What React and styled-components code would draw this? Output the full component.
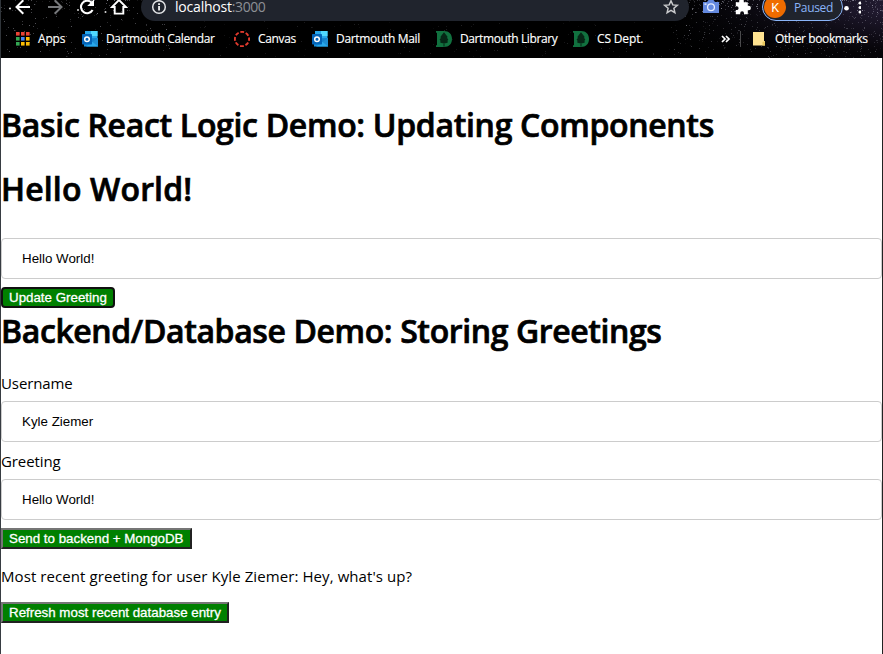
import React from "react";
import styled, { createGlobalStyle } from "styled-components";

const Global = createGlobalStyle`
  * { box-sizing: border-box; }
  html, body { margin: 0; padding: 0; background: #fff; overflow: hidden; }
`;

const Window = styled.div`
  width: 883px;
  height: 654px;
  overflow: hidden;
  display: flex;
  flex-direction: column;
  font-family: "Open Sans", "Noto Sans", sans-serif;
  color: #000;
`;

const Chrome = styled.header`
  position: relative;
  height: 58px;
  flex: none;
  overflow: hidden;
  background: #000;
  border-left: 1px solid #30353a;
`;

const Sky = styled.svg`
  position: absolute;
  inset: 0;
  display: block;
`;

const NavRow = styled.div`
  position: relative;
  display: flex;
  align-items: center;
  height: 28px;
  margin-top: -7px;
  padding-left: 13px;
`;

const NavIcon = styled.svg`
  display: block;
  flex: none;
  width: 18px;
  height: 18px;
  margin-left: ${(p) => p.$before || 0}px;
  margin-right: ${(p) => p.$gap || 0}px;
`;

const AddressBar = styled.div`
  display: flex;
  align-items: center;
  flex: none;
  width: 548px;
  height: 28px;
  padding: 0 9px;
  border-radius: 14px;
  background: #20242d;
  color: #8d9095;
  font-size: 14px;
  line-height: 20px;
`;

const Url = styled.div`
  flex: 1;
  letter-spacing: -0.43px;
`;

const Host = styled.span`
  color: #fff;
  letter-spacing: -0.2px;
`;

const Profile = styled.div`
  display: flex;
  align-items: center;
  flex: none;
  width: 81px;
  height: 28px;
  border: 1px solid #8ab4f8;
  border-radius: 14px;
  background: #20242d;
  color: #8ab4f8;
  font-size: 12px;
  letter-spacing: -0.35px;
`;

const Avatar = styled.span`
  display: grid;
  place-items: center;
  width: 22px;
  height: 22px;
  margin: 0 8px 0 1px;
  border-radius: 50%;
  background: #ef6c00;
  color: #fff;
  font-family: Roboto, sans-serif;
  font-size: 12.5px;
`;

const Bookmarks = styled.nav`
  position: relative;
  display: flex;
  align-items: center;
  height: 36px;
  padding-left: 13px;
  color: #fff;
  font-size: 12px;
  line-height: 16px;
  -webkit-text-stroke: 0.15px #fff;
`;

const Bookmark = styled.div`
  display: flex;
  align-items: center;
  flex: none;
  gap: 8px;
  width: ${(p) => p.$width}px;
  white-space: nowrap;
  letter-spacing: ${(p) => p.$spacing || 0}px;
  svg { display: block; flex: none; }
`;

const Divider = styled.i`
  width: 1px;
  height: 16px;
  margin-right: 12px;
  background: #4a4a4c;
`;

const Page = styled.main`
  flex: 1;
  background: #fff;
  border-left: 1px solid #373c42;
  border-right: 1px solid #222;
  padding-top: 45px;
`;

const Heading = styled.h1`
  margin: ${(p) => p.$before || 0}px 0 ${(p) => p.$after}px;
  font-size: 32px;
  line-height: 43px;
  font-weight: 600;
  -webkit-text-stroke: 0.7px #000;
  white-space: nowrap;
  letter-spacing: ${(p) => p.$spacing || 0}px;
`;

const Label = styled.label`
  display: block;
  height: 21px;
  font-size: 15px;
  line-height: 23px;
  letter-spacing: -0.1px;
`;

const Field = styled.input`
  display: block;
  width: 100%;
  height: 41px;
  margin: 8px 0;
  padding: 12px 20px;
  border: 1px solid #ccc;
  border-radius: 4px;
  outline: none;
  background: #fff;
  color: #000;
  font-family: "Liberation Sans", Arial, sans-serif;
  font-size: 13.333px;
`;

const Action = styled.button`
  display: block;
  width: ${(p) => p.$width}px;
  height: 21px;
  padding: 0 6px;
  border: 2px solid;
  border-color: ${(p) => (p.$focused ? "#101010" : "#767676 #212121 #212121 #767676")};
  border-radius: ${(p) => (p.$focused ? 4 : 0)}px;
  background: #008000;
  color: #fff;
  font-family: "Liberation Sans", Arial, sans-serif;
  font-size: 13.333px;
  line-height: 16px;
  text-align: left;
  white-space: nowrap;
  -webkit-text-stroke: 0.3px #fff;
`;

const Message = styled.p`
  margin: 17px 0 15px;
  font-size: 15px;
  line-height: 21px;
  white-space: nowrap;
  letter-spacing: 0.085px;
`;

function makeStars() {
  let seed = 71;
  const rand = () => {
    seed = (seed * 16807) % 2147483647;
    return seed / 2147483647;
  };
  const stars = [];
  for (let i = 0; i < 220; i++) {
    stars.push({ x: rand() * 180, y: 58 * Math.pow(rand(), 1.9), o: 0.08 + rand() * 0.32 });
  }
  for (let i = 0; i < 520; i++) {
    stars.push({ x: 882 - 210 * Math.pow(rand(), 1.3), y: 58 * Math.pow(rand(), 1.3), o: 0.06 + rand() * 0.22 });
  }
  for (let i = 0; i < 130; i++) {
    stars.push({ x: 190 + rand() * 490, y: 20 + rand() * 37, o: 0.04 + rand() * 0.11 });
  }
  for (let i = 0; i < 120; i++) {
    stars.push({ x: 690 + rand() * 190, y: rand() * 13, o: 0.2 + rand() * 0.35 });
  }
  return stars;
}
const STARS = makeStars();

const StarField = () => (
  <Sky width="882" height="58">
    <defs>
      <linearGradient id="glow" x1="0" x2="1">
        <stop offset="0.76" stopColor="#171426" stopOpacity="0" />
        <stop offset="1" stopColor="#211a30" />
      </linearGradient>
      <linearGradient id="fade" x1="0" x2="0" y1="0" y2="1">
        <stop offset="0.2" stopColor="#000" stopOpacity="0" />
        <stop offset="0.9" stopColor="#000" stopOpacity="0.85" />
      </linearGradient>
    </defs>
    <rect width="882" height="58" fill="url(#glow)" />
    <rect width="882" height="58" fill="url(#fade)" />
    {STARS.map((s, i) => (
      <rect key={i} x={Math.floor(s.x)} y={Math.floor(s.y)} width="1" height="1" fill="#dcdcec" opacity={s.o} />
    ))}
    <g fill="#d5d5d5">
      <circle cx="9" cy="8.5" r="1.1" />
      <circle cx="104.5" cy="12" r="1" />
      <circle cx="77" cy="10" r="1" />
    </g>
  </Sky>
);

const Outlook = () => (
  <svg width="16" height="16" viewBox="0 0 16 16">
    <path d="M3 0h12.5v9H3z" fill="#28a8ea" />
    <path d="M9 0h6.5v5H9z" fill="#50d9ff" />
    <path d="M2 7h14v8.5H2z" fill="#1490df" />
    <path d="M16 7v8.5H4z" fill="#28a8ea" />
    <path d="M7 8l9 7.5V7z" fill="#1677bd" opacity=".55" />
    <rect x="0" y="3" width="10" height="10.5" rx="0.7" fill="#0364b8" />
    <circle cx="5" cy="8.2" r="2.3" fill="none" stroke="#fff" strokeWidth="1.5" />
  </svg>
);

const Dartmouth = () => (
  <svg width="16" height="16" viewBox="0 0 16 16">
    <path d="M0 0h8c5 0 8 3.2 8 8s-3 8-8 8H0v-1.5l1-.5V2L0 1.5z" fill="#11713f" />
    <path d="M8 1.2L10 3.8l1.5 2-.4 1.1 1.2 1.7-.8 1.2.3 1.7-2.1.8-1.2-.2v3.4h-1v-3.4l-1.3.2-2-.8.3-1.7-.9-1.2L4.9 7l-.5-1.1L6 3.8z" fill="#062616" />
  </svg>
);

const CanvasLogo = () => (
  <svg width="16" height="16" viewBox="0 0 16 16">
    <circle cx="8" cy="8" r="7.1" fill="none" stroke="#e23b2e" strokeWidth="1.9" strokeDasharray="3.8 1.776" strokeDashoffset="1.9" />
  </svg>
);

const APP_COLORS = ["#ea4335", "#ea4335", "#ea4335", "#34a853", "#4285f4", "#fbbc04", "#34a853", "#fbbc04", "#fbbc04"];
const AppsGrid = () => (
  <svg width="16" height="16" viewBox="0 0 16 16">
    {APP_COLORS.map((c, i) => (
      <rect key={i} x={2 + (i % 3) * 5} y={1 + Math.floor(i / 3) * 5} width="3.6" height="3.6" fill={c} />
    ))}
  </svg>
);

export default function App() {
  return (
    <Window>
      <Global />
      <Chrome>
        <StarField />
        <NavRow>
          <NavIcon $gap={14} viewBox="0 0 18 18" fill="none" stroke="#fff" strokeWidth="2">
            <path d="M16 9H3M9.3 2.2L2.5 9l6.8 6.8" />
          </NavIcon>
          <NavIcon $gap={14} viewBox="0 0 18 18" fill="none" stroke="#77797c" strokeWidth="2">
            <path d="M2 9h13M8.7 2.2L15.5 9l-6.8 6.8" />
          </NavIcon>
          <NavIcon $gap={14} viewBox="0 0 18 18">
            <path d="M14.6 12A6.2 6.2 0 1 1 13.5 4.5L15 6" fill="none" stroke="#fff" strokeWidth="2.1" />
            <path d="M16 1.2v6.9H9.2z" fill="#fff" />
          </NavIcon>
          <NavIcon $gap={13} viewBox="0 0 18 18">
            <path d="M9 2L2 9h2.7v6.6h8.6V9H16z" fill="none" stroke="#fff" strokeWidth="1.9" />
          </NavIcon>
          <AddressBar>
            <NavIcon $gap={7} viewBox="0 0 18 18">
              <circle cx="9" cy="9" r="6.3" fill="none" stroke="#e3e4e6" strokeWidth="1.5" />
              <path d="M8.2 8.1h1.7v4.4H8.2zM8.2 5.2h1.7v1.7H8.2z" fill="#fff" />
            </NavIcon>
            <Url><Host>localhost</Host>:3000</Url>
            <NavIcon viewBox="0 0 18 18">
              <path d="M9 2.8l1.8 4.1 4.5.4-3.4 3 1 4.4L9 12.4l-3.9 2.3 1-4.4-3.4-3 4.5-.4z" fill="none" stroke="#c9cacc" strokeWidth="1.5" />
            </NavIcon>
          </AddressBar>
          <NavIcon $before={13} $gap={14} viewBox="0 0 18 18">
            <path d="M1 4h4l1.5-2h5L13 4h4v11H1z" fill="#6489df" />
            <circle cx="9" cy="9.2" r="3.4" fill="none" stroke="#e6edff" strokeWidth="1.3" />
            <path d="M2.5 5.5h2v1.2h-2z" fill="#fff" />
          </NavIcon>
          <NavIcon $gap={10} viewBox="0 0 18 18">
            <path d="M1.8 4.2h3.4V3.1a2.3 2.3 0 0 1 4.6 0v1.1h4v3.6h.9a2.2 2.2 0 0 1 0 4.4h-.9v4H10v-1a1.9 1.9 0 0 0-3.8 0v1H1.8v-4.1h.9a1.9 1.9 0 0 0 0-3.8h-.9z" fill="#fff" />
          </NavIcon>
          <Profile><Avatar>K</Avatar>Paused</Profile>
          <NavIcon viewBox="0 0 18 18">
            <circle cx="3.5" cy="10.3" r="2.3" fill="#fff" />
            <g fill="#fff"><circle cx="17" cy="5" r="1.5" /><circle cx="17" cy="9.5" r="1.5" /><circle cx="17" cy="14" r="1.5" /></g>
          </NavIcon>
        </NavRow>
        <Bookmarks>
          <Bookmark $width={68} $spacing={-0.2}><AppsGrid />Apps</Bookmark>
          <Bookmark $width={152} $spacing={-0.37}><Outlook />Dartmouth Calendar</Bookmark>
          <Bookmark $width={78} $spacing={-0.35}><CanvasLogo />Canvas</Bookmark>
          <Bookmark $width={124} $spacing={-0.32}><Outlook />Dartmouth Mail</Bookmark>
          <Bookmark $width={137} $spacing={-0.4}><Dartmouth />Dartmouth Library</Bookmark>
          <Bookmark $width={148} $spacing={-0.15}><Dartmouth />CS Dept.</Bookmark>
          <Bookmark $width={19}>
            <svg width="10" height="8" viewBox="0 0 10 8"><path d="M1 1l3 3-3 3M5 1l3 3-3 3" fill="none" stroke="#fff" strokeWidth="1.7" /></svg>
          </Bookmark>
          <Divider />
          <Bookmark $width={120} $spacing={-0.4}>
            <svg width="14" height="16" viewBox="0 0 14 16"><path d="M0 1h11v9h1v4.5H0z" fill="#ffe391" /><path d="M9.5 14.5V11l2.5-1v4.5z" fill="#e8c65d" /></svg>
            Other bookmarks
          </Bookmark>
        </Bookmarks>
      </Chrome>
      <Page>
        <Heading $after={21} $spacing={-0.32}>Basic React Logic Demo: Updating Components</Heading>
        <Heading $after={28} $spacing={0.15}>Hello World!</Heading>
        <Field defaultValue="Hello World!" />
        <Action $focused $width={114}>Update Greeting</Action>
        <Heading $before={1} $after={20} $spacing={-0.39}>Backend/Database Demo: Storing Greetings</Heading>
        <Label>Username</Label>
        <Field defaultValue="Kyle Ziemer" />
        <Label>Greeting</Label>
        <Field defaultValue="Hello World!" />
        <Action $width={191}>Send to backend + MongoDB</Action>
        <Message>Most recent greeting for user Kyle Ziemer: Hey, what's up?</Message>
        <Action $width={228}>Refresh most recent database entry</Action>
      </Page>
    </Window>
  );
}
